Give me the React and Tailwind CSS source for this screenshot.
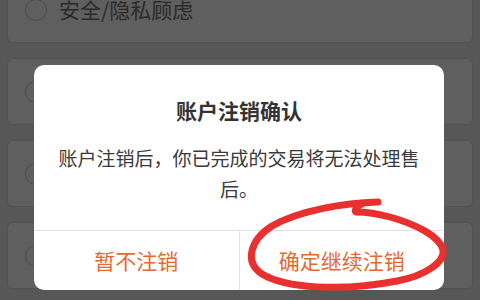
const reasons = ['安全/隐私顾虑', '', '', ''];

const ReasonCard = ({ label }) => (
  <div className="h-[67px] shrink-0 rounded-[6px] border border-[#525252] bg-[#5f5f5f] flex items-center px-[17px] gap-[12px]">
    <span className="w-[22px] h-[22px] rounded-full border-[1.5px] border-[#4a4a4a] shrink-0" />
    <span className="text-[21px] text-[#2a2a2a]">{label}</span>
  </div>
);

const App = () => {
  return (
    <div
      className="relative w-[480px] h-[300px] overflow-hidden bg-[#575757]"
      style={{ fontFamily: '"Noto Sans CJK SC", "Noto Sans", sans-serif' }}
    >
      <div className="flex flex-col gap-[15px] px-[7px] mt-[-24px]">
        {reasons.map((r, i) => (
          <ReasonCard key={i} label={r} />
        ))}
      </div>

      {/* confirm dialog */}
      <div className="absolute left-[34px] top-[65px] w-[410px] h-[225px] bg-white rounded-[10px] flex flex-col">
        <div className="flex flex-col items-center pt-[30px] pb-[26px]">
          <div className="text-[21px] leading-[30px] font-bold text-[#333333]">账户注销确认</div>
          <div className="mt-[17px] text-[19px] leading-[31px] text-[#3a3a3a] text-center">
            账户注销后，你已完成的交易将无法处理售
            <br />
            后。
          </div>
        </div>
        <div className="flex-1 flex border-t border-[#e2e2e2]">
          <div className="flex-1 flex items-center justify-center text-[21px] text-[#e4692f]">暂不注销</div>
          <div className="flex-1 flex items-center justify-center text-[21px] text-[#e4692f] border-l border-[#e2e2e2]">确定继续注销</div>
        </div>
      </div>

      {/* hand drawn mark */}
      <svg className="absolute left-0 top-0" width="480" height="300" viewBox="0 0 480 300" fill="none">
        <path
          d="M378,202 C345,203 300,210 272,226 C250,240 244,262 262,274 C285,288 340,292 397,281 C425,276 445,262 443,250 C440,236 415,224 390,217 C375,213 360,212 356,212 C354,210 357,206 362,204"
          stroke="#e8302e"
          strokeWidth="7"
          strokeLinecap="round"
          strokeLinejoin="round"
        />
      </svg>
    </div>
  );
};

export default App;
